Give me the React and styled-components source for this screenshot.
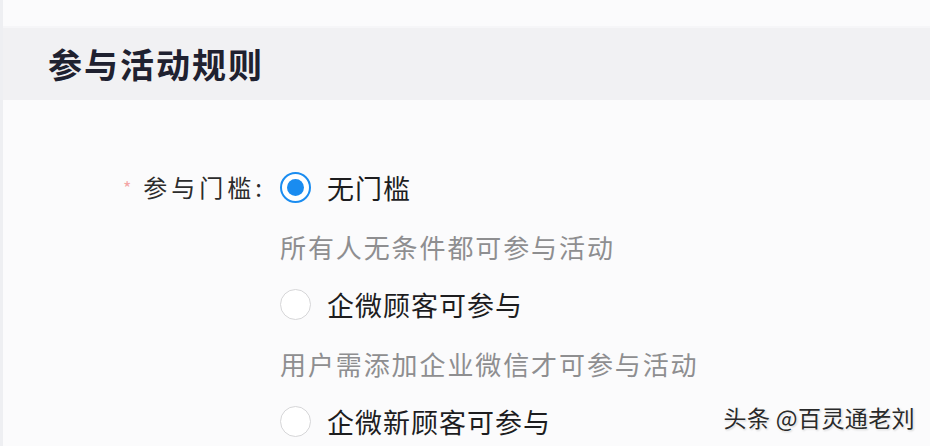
import styled, { createGlobalStyle } from "styled-components"

const GlobalStyle = createGlobalStyle`
    html, body {
        margin: 0;
        padding: 0;
        background: #fbfbfc;
    }
    body {
        font-family: "Noto Sans CJK SC", "Noto Sans", sans-serif;
    }
`

const Page = styled.div`
    position: relative;
    width: 930px;
    height: 446px;
    overflow: hidden;
    background: #fbfbfc;
    border-left: 3px solid #eeeff2;
    box-sizing: border-box;
`

const Header = styled.div`
    display: flex;
    align-items: center;
    margin-top: 26px;
    height: 74px;
    padding-left: 45px;
    background: #f1f1f3;
    border-top: 2px solid #f6f6f8;
    box-sizing: border-box;
`

const Title = styled.h1`
    margin: 0;
    margin-top: -2px;
    font-size: 34px;
    font-weight: 700;
    color: #1f2130;
    letter-spacing: 2px;
`

const Form = styled.div`
    display: grid;
    grid-template-columns: 277px 1fr;
    padding-top: 57px;
`

const Label = styled.div`
    display: flex;
    justify-content: flex-end;
    align-items: center;
    height: 59px;
    padding-right: 14px;
    font-size: 24px;
    letter-spacing: 4px;
    color: #2c2c2c;
`

const Star = styled.span`
    color: #f4a6a6;
    font-size: 18px;
    margin-right: 12px;
    letter-spacing: 0;
`

const Options = styled.div`
    display: flex;
    flex-direction: column;
`

const Option = styled.div`
    display: flex;
    align-items: center;
    height: 61px;
    gap: 16px;
    font-size: 27px;
    letter-spacing: 1px;
    color: #1d1d1f;
`

const Radio = styled.span`
    width: 31px;
    height: 31px;
    box-sizing: border-box;
    border-radius: 50%;
    border: ${p => (p.$checked ? "2px solid #1a8cf0" : "1.5px solid #d6d6d8")};
    background: #fff;
    display: flex;
    align-items: center;
    justify-content: center;

    &::after {
        content: "";
        display: ${p => (p.$checked ? "block" : "none")};
        width: 17px;
        height: 17px;
        border-radius: 50%;
        background: #1a8cf0;
    }
`

const Hint = styled.div`
    display: flex;
    align-items: center;
    height: 56px;
    font-size: 26px;
    letter-spacing: 1.9px;
    color: #8e8e90;
`

const Watermark = styled.div`
    position: absolute;
    right: 15px;
    bottom: 12px;
    font-size: 23px;
    letter-spacing: 0.4px;
    color: #2a2a2a;
    text-shadow: 0 0 3px #fff, 0 0 3px #fff, 1px 1px 2px rgba(0, 0, 0, 0.25);
`

function App() {
    return (
        <Page>
            <GlobalStyle />
            <Header>
                <Title>参与活动规则</Title>
            </Header>
            <Form>
                <Label>
                    <Star>*</Star>参与门槛:
                </Label>
                <Options>
                    <Option>
                        <Radio $checked />
                        无门槛
                    </Option>
                    <Hint>所有人无条件都可参与活动</Hint>
                    <Option>
                        <Radio />
                        企微顾客可参与
                    </Option>
                    <Hint>用户需添加企业微信才可参与活动</Hint>
                    <Option>
                        <Radio />
                        企微新顾客可参与
                    </Option>
                </Options>
            </Form>
            <Watermark>头条 @百灵通老刘</Watermark>
        </Page>
    )
}

export default App
